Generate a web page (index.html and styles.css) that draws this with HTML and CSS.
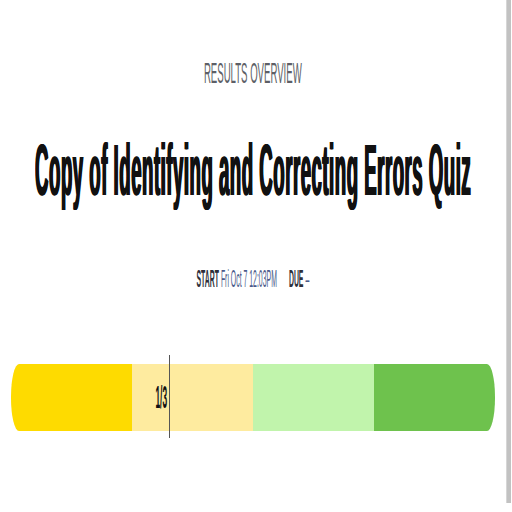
FILE: index.html
```html
<!DOCTYPE html>
<html>
<head>
<meta charset="utf-8">
<link rel="stylesheet" href="styles.css">
</head>
<body>
<div class="page">
  <div class="eyebrow"><span class="sq sq-eyebrow">RESULTS OVERVIEW</span></div>
  <h1 class="title"><span class="sq sq-title">Copy of Identifying and Correcting Errors Quiz</span></h1>
  <div class="meta"><span class="sq sq-meta"><b class="label">START</b> <span class="value">Fri Oct 7 12:03PM</span><span class="spacer"></span><b class="label">DUE</b> <span class="value">–</span></span></div>
  <div class="bar-wrap">
    <div class="bar">
      <div class="seg seg-1"></div>
      <div class="seg seg-2"></div>
      <div class="seg seg-3"></div>
      <div class="seg seg-4"></div>
    </div>
    <div class="marker">
      <span class="marker-label"><span class="sq sq-mark">1/3</span></span>
      <span class="marker-line"></span>
    </div>
  </div>
</div>
<div class="scroll"></div>
</body>
</html>
```
FILE: styles.css
```css
html, body {
  margin: 0;
  padding: 0;
  background: #fff;
}
body {
  width: 512px;
  height: 512px;
  overflow: hidden;
  display: flex;
  font-family: "Liberation Sans", Arial, sans-serif;
}
.page {
  flex: 1;
  display: flex;
  flex-direction: column;
  align-items: center;
  padding-top: 58px;
  min-width: 0;
}
.sq {
  display: inline-block;
  white-space: nowrap;
  transform-origin: center center;
}
.eyebrow {
  height: 29px;
  font-size: 30px;
  line-height: 29px;
  color: #5d5f66;
  display: flex;
  justify-content: center;
  width: 100%;
}
.sq-eyebrow { transform: scaleX(0.32); }
.title {
  margin: 47px 0 0;
  height: 72px;
  font-size: 73px;
  line-height: 72px;
  font-weight: 700;
  color: #111;
  display: flex;
  justify-content: center;
  width: 100%;
}
.sq-title {
  transform: scaleX(0.255);
  letter-spacing: 2px;
  text-shadow: -2px 0 #111, 2px 0 #111;
}
.meta {
  margin-top: 62px;
  height: 23px;
  font-size: 23px;
  line-height: 23px;
  display: flex;
  justify-content: center;
  width: 100%;
}
.sq-meta { transform: scaleX(0.3); }
.label { color: #2d2f3a; font-weight: 700; }
.value { color: #4a5a8a; }
.spacer { display: inline-block; width: 40px; }
.bar-wrap {
  margin-top: 73px;
  align-self: stretch;
  padding: 0 11px;
  position: relative;
}
.bar {
  display: flex;
  height: 67px;
  border-radius: 8px / 33px;
  overflow: hidden;
}
.seg { flex: 1; }
.seg-1 { background: #fedb00; }
.seg-2 { background: #feeb9f; }
.seg-3 { background: #c1f4ac; }
.seg-4 { background: #6ec24d; }
.marker {
  position: absolute;
  left: 169px;
  top: -9px;
  height: 83px;
}
.marker-line {
  position: absolute;
  left: 0;
  top: 0;
  width: 1px;
  height: 83px;
  background: #555;
}
.marker-label {
  position: absolute;
  right: 2px;
  top: 27px;
  font-size: 31px;
  line-height: 31px;
  font-weight: 700;
  color: #111;
  display: flex;
  justify-content: flex-end;
}
.sq-mark { transform: scaleX(0.27); transform-origin: right center; }
.scroll {
  width: 5px;
  margin-right: 1px;
  height: 503px;
  background: #c2c2c2;
  border-left: 1px solid #d6d6d6;
  box-sizing: border-box;
}
```
